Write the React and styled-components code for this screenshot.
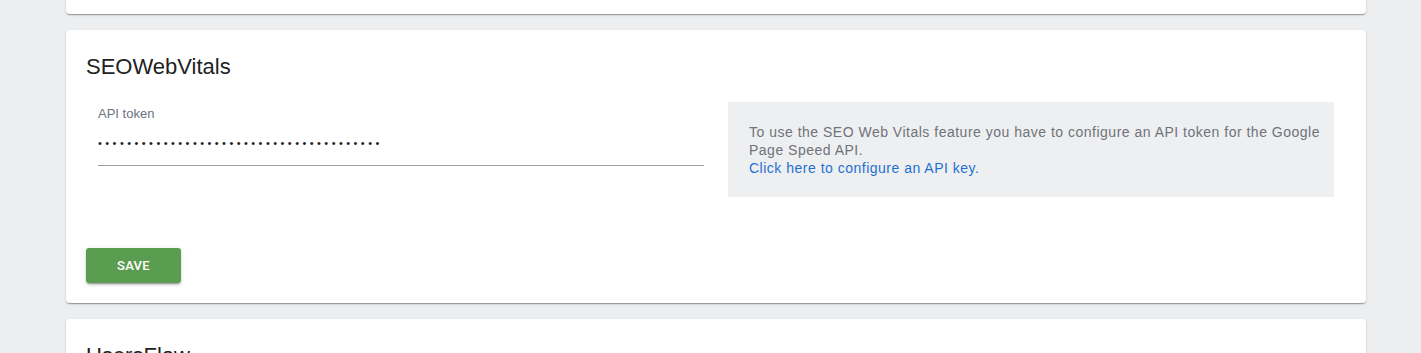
import React from 'react';
import styled, { createGlobalStyle } from 'styled-components';

const GlobalStyle = createGlobalStyle`
    body {
        margin: 0;
        background: #edeef0;
        font-family: "Liberation Sans", Arial, sans-serif;
        overflow: hidden;
    }
`

function App() {
    const [token, setToken] = React.useState('AIzaSyD3xk29fLq8Pw0mRv7TgHn41ZcYbUoEe5Q');
    return (
        <Page>
            <GlobalStyle />
            <Card stub />
            <Card>
                <Title>SEOWebVitals</Title>
                <FormRow>
                    <Column>
                        <Field>
                            <Label>API token</Label>
                            <TokenInput type='password' value={token} onChange={ev => setToken(ev.currentTarget.value)} />
                        </Field>
                    </Column>
                    <Column>
                        <InfoBox>
                            To use the SEO Web Vitals feature you have to configure an API token for the Google Page Speed API.
                            <br />
                            <InfoLink href='#'>Click here to configure an API key.</InfoLink>
                        </InfoBox>
                    </Column>
                </FormRow>
                <SaveButton type='button'>Save</SaveButton>
            </Card>
            <Card>
                <Title>UsersFlow</Title>
            </Card>
        </Page>
    )
}

const Page = styled.div`
    display: flex;
    flex-direction: column;
    gap: 16px;
    padding-left: 66px;
    width: 1300px;
    margin-top: -24px;
`

const Card = styled.div`
    background: #fff;
    border-radius: 4px;
    box-shadow: 0 2px 1px -1px rgba(0,0,0,.2), 0 1px 1px 0 rgba(0,0,0,.14), 0 1px 3px 0 rgba(0,0,0,.12);
    padding: ${props => props.stub ? '0' : '21px 20px 20px'};
    height: ${props => props.stub ? '38px' : 'auto'};
    box-sizing: border-box;
`

const Title = styled.h2`
    margin: 0;
    font-size: 22px;
    line-height: 32px;
    font-weight: 400;
    color: #222;
`

const FormRow = styled.div`
    display: grid;
    grid-template-columns: 1fr 1fr;
    margin-top: 19px;
`

const Column = styled.div`
    padding: 0 12px;
`

const Field = styled.div`
    padding-top: 4px;
    border-bottom: 1px solid #9e9e9e;
    height: 64px;
    box-sizing: border-box;
    display: flex;
    flex-direction: column;
`

const Label = styled.label`
    font-size: 13px;
    line-height: 16px;
    color: #6b7280;
`

const TokenInput = styled.input`
    border: none;
    outline: none;
    padding: 0;
    margin-top: 8px;
    height: 26px;
    font-size: 11px;
    letter-spacing: 3.45px;
    color: #222;
    background: none;
    font-family: "Liberation Sans", Arial, sans-serif;
`

const InfoBox = styled.div`
    background: #eeeff1;
    padding: 21px 4px 20px 21px;
    font-size: 14px;
    line-height: 18px;
    letter-spacing: 0.5px;
    color: #6f737a;
`

const InfoLink = styled.a`
    color: #1f6fd1;
    text-decoration: none;
`

const SaveButton = styled.button`
    margin-top: 51px;
    width: 95px;
    height: 35px;
    border: none;
    border-radius: 3px;
    background: #5a9d50;
    color: #fff;
    font-family: Roboto, "Liberation Sans", sans-serif;
    font-size: 13px;
    font-weight: 500;
    letter-spacing: 0.3px;
    text-transform: uppercase;
    box-shadow: 0 3px 1px -2px rgba(0,0,0,.2), 0 2px 2px 0 rgba(0,0,0,.14), 0 1px 5px 0 rgba(0,0,0,.12);
    cursor: pointer;
`

export default App;
